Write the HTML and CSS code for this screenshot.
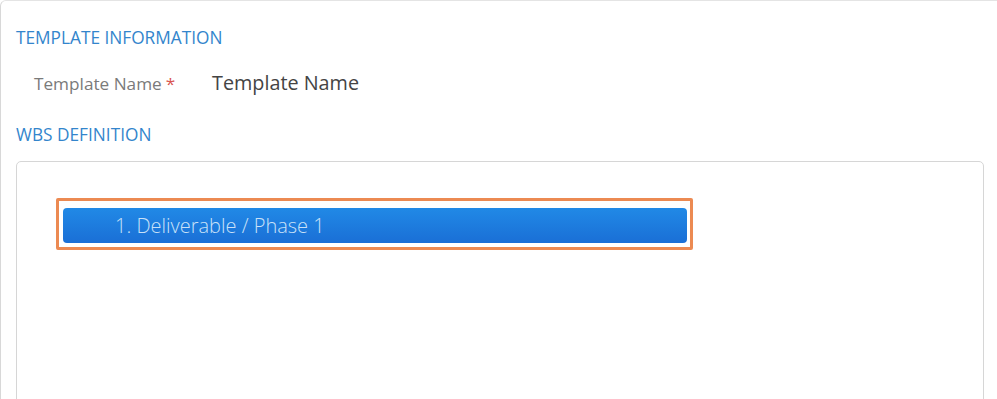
FILE: index.html
```html
<!DOCTYPE html>
<html>
<head>
<meta charset="utf-8">
<link rel="stylesheet" href="styles.css">
</head>
<body>
<div class="card">
  <h2 class="section-title">TEMPLATE INFORMATION</h2>
  <div class="field">
    <span class="label">Template Name<span class="req">*</span></span>
    <span class="value">Template Name</span>
  </div>
  <h2 class="section-title wbs">WBS DEFINITION</h2>
  <div class="tree-box">
    <div class="node-frame">
      <div class="node">1. Deliverable / Phase 1</div>
    </div>
  </div>
</div>
</body>
</html>
```
FILE: styles.css
```css
html, body {
  margin: 0;
  padding: 0;
  background: #ffffff;
  overflow: hidden;
}
body {
  font-family: "Open Sans", "Noto Sans", sans-serif;
  width: 997px;
  height: 399px;
}
.card {
  width: 1010px;
  height: 440px;
  border: 1px solid #e4e4e4;
  border-left-color: #d8d8d8;
  border-radius: 6px 0 0 0;
  padding: 0 0 0 15px;
  box-sizing: border-box;
}
.section-title {
  margin: 0;
  font-weight: 400;
  font-size: 17.25px;
  line-height: 24px;
  color: #3385cc;
  padding-top: 25px;
}
.field {
  display: flex;
  align-items: baseline;
  margin-top: 19px;
  padding-left: 18px;
  line-height: 28px;
}
.label {
  font-size: 17.2px;
  color: #7a7a7a;
  width: 178px;
}
.req {
  color: #d9534f;
  margin-left: 4px;
}
.value {
  font-size: 19.8px;
  color: #444;
}
.section-title.wbs {
  padding-top: 25px;
}
.tree-box {
  margin-top: 14px;
  width: 968px;
  height: 300px;
  border: 1px solid #d6d6d6;
  border-radius: 5px;
  box-sizing: border-box;
  padding: 36px 0 0 39px;
}
.node-frame {
  width: 637px;
  height: 52px;
  border: 3px solid #ec8a52;
  box-sizing: border-box;
  padding: 7px 3px 0 4px;
  border-radius: 2px;
}
.node {
  height: 35px;
  border-radius: 4px;
  background: linear-gradient(#2189e6, #1a6fd6);
  color: #c9e1f8;
  font-size: 20px;
  font-weight: 300;
  line-height: 35px;
  padding-left: 52px;
}
```
